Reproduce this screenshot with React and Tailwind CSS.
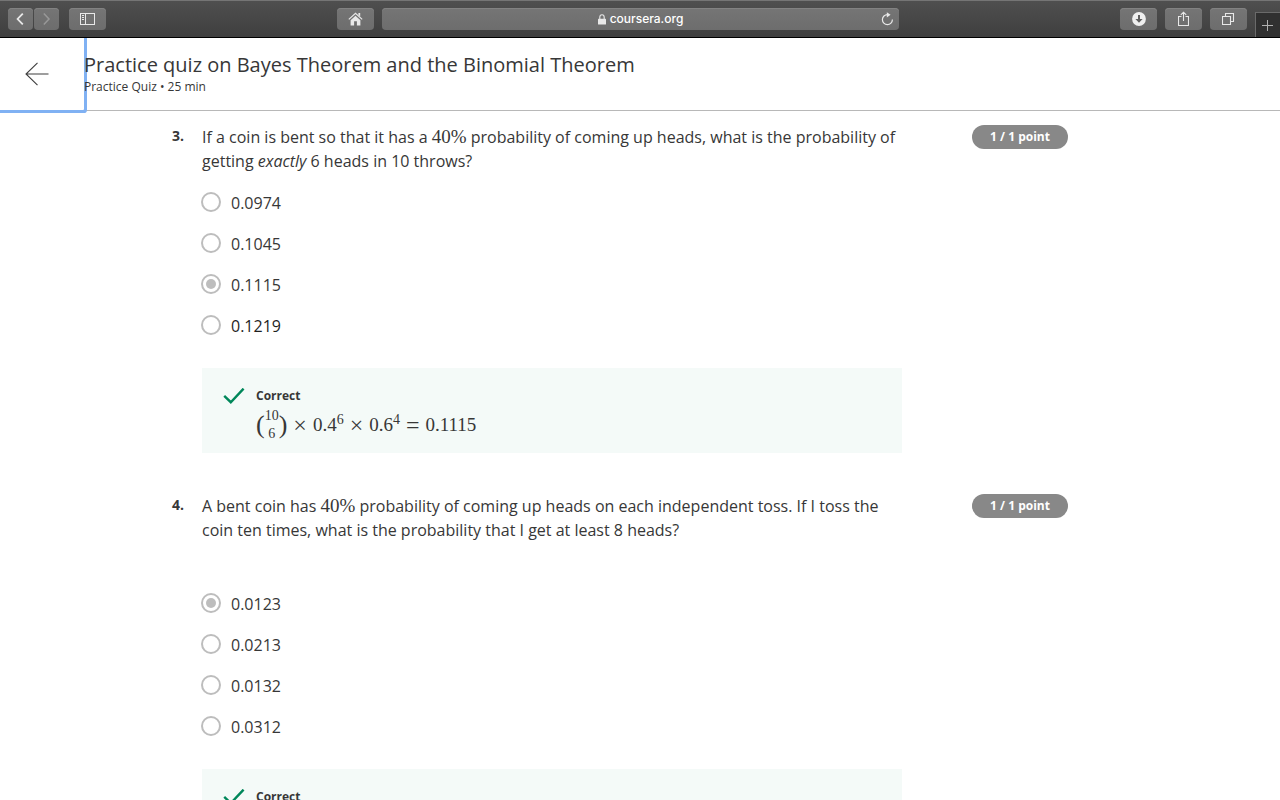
import React from "react";

const toolButton =
  "flex h-[22px] items-center justify-center rounded-[4px] bg-linear-to-b from-[#757575] to-[#6d6d6d] text-[#e8e8e8] shadow-[inset_0_1px_0_#828282]";

function Toolbar() {
  return (
    <nav
      aria-label="Browser"
      className="relative z-10 grid h-[38px] shrink-0 grid-cols-[337fr_562fr_381fr] border-t border-b border-t-[#757575] border-b-black bg-linear-to-b from-[#4f4f4f] to-[#3f3f3f]"
    >
      <div className="flex items-center pl-2">
        <button aria-label="Back" className={`${toolButton} w-[25px]`}>
          <svg width="9" height="12" viewBox="0 0 9 12" fill="none" stroke="currentColor" strokeWidth="1.8">
            <path d="M6.8.6 1.6 6l5.2 5.4" />
          </svg>
        </button>
        <button aria-label="Forward" className={`${toolButton} ml-px w-[25px]`}>
          <svg width="9" height="12" viewBox="0 0 9 12" fill="none" stroke="#989898" strokeWidth="1.5">
            <path d="M1.8.6 7 6l-5.2 5.4" />
          </svg>
        </button>
        <button aria-label="Sidebar" className={`${toolButton} ml-[10px] w-[37px]`}>
          <svg width="15" height="12" viewBox="0 0 15 12" fill="none" stroke="currentColor">
            <rect x=".5" y=".5" width="14" height="11" />
            <path d="M5.5.5v11M2 2.5h2M2 4.5h2M2 6.5h2" />
          </svg>
        </button>
      </div>
      <div className="flex items-center gap-2">
        <button aria-label="Home" className={`${toolButton} w-[37px] shrink-0`}>
          <svg width="15" height="14" viewBox="0 0 15 14" fill="none" stroke="currentColor">
            <path d="M.8 7.4 7.5 1.2l6.7 6.2" strokeWidth="1.2" />
            <path d="M10.4 1h1.8v3.6l-1.8-1.7zM2.6 8.2l4.9-4.5 4.9 4.5V13.5H8.9V9.3H6.1v4.2H2.6z" fill="currentColor" stroke="none" />
          </svg>
        </button>
        <div className={`${toolButton} min-w-0 flex-1 px-[5px]`}>
          <span className="w-[14px]" />
          <a
            href="#address"
            className="flex flex-1 items-center justify-center gap-1 font-[Inter,sans-serif] text-[12px] leading-4 font-medium text-white"
          >
            <svg width="8" height="11" viewBox="0 0 8 11" fill="none">
              <path d="M1.8 5V3.2a2.2 2.4 0 0 1 4.4 0V5" stroke="#e8e8e8" strokeWidth="1.1" />
              <rect y="4.7" width="8" height="5.8" rx=".6" fill="#e8e8e8" />
            </svg>
            coursera.org
          </a>
          <button aria-label="Reload">
            <svg width="14" height="14" viewBox="0 0 14 14" fill="none" stroke="currentColor" strokeWidth="1.2">
              <path d="M7.6 2.7A5 5 0 1 0 12.4 7.6" />
              <path d="M6.8.3 10.6 2.8 6.8 5.4z" fill="currentColor" stroke="none" />
            </svg>
          </button>
        </div>
      </div>
      <div className="flex items-center justify-end gap-2">
        <button aria-label="Downloads" className={`${toolButton} w-[37px]`}>
          <svg width="14" height="14" viewBox="0 0 14 14">
            <circle cx="7" cy="7" r="6.9" fill="#efefef" />
            <path d="M6 3h2v4h2.6L7 10.8 3.4 7H6z" fill="#606060" />
          </svg>
        </button>
        <button aria-label="Share" className={`${toolButton} w-[37px]`}>
          <svg width="11" height="16" viewBox="0 0 11 16" fill="none" stroke="currentColor" strokeWidth="1.1">
            <path d="M3.5 5.5h-3v9h10v-9h-3M5.5 10V1.2M2.8 3.9l2.7-2.7 2.7 2.7" />
          </svg>
        </button>
        <button aria-label="Tabs" className={`${toolButton} w-[37px]`}>
          <svg width="13" height="12" viewBox="0 0 13 12" fill="none" stroke="currentColor" strokeWidth="1.1">
            <path d="M.5 3.5h8v8h-8zM3.5 3.2V.5h8v8H8.8" />
          </svg>
        </button>
        <button
          aria-label="New tab"
          className="flex h-[25px] w-[25px] items-center justify-center self-end border-t border-l border-[#6a6a6a] bg-[#303030]"
        >
          <svg width="12" height="12" viewBox="0 0 12 12" stroke="#b0b0b0" strokeWidth="1">
            <path d="M0 6.5h11M5.5 1v11" />
          </svg>
        </button>
      </div>
    </nav>
  );
}

function Header() {
  return (
    <header className="flex h-[73px] shrink-0 border-b border-[#b8b8b8]">
      <a
        href="#back"
        aria-label="Back to course"
        className="flex w-[84px] items-center rounded-br-[1px] pl-[25px] shadow-[0_0_0_3px_#80b1f3]"
      >
        <svg width="24" height="24" viewBox="0 0 24 24" fill="none" stroke="#3f3f3f" strokeWidth="1.1">
          <path d="M23.5 12H1M12.5.8 1 12l11.5 11.2" />
        </svg>
      </a>
      <div className="relative flex flex-col justify-center gap-px">
        <h1 className="text-[20px] leading-6">Practice quiz on Bayes Theorem and the Binomial Theorem</h1>
        <p className="text-[12px] leading-[18px]">Practice Quiz • 25 min</p>
      </div>
    </header>
  );
}

function MathText({ children }) {
  return <span className="font-['Liberation_Serif',serif] text-[19px] leading-none">{children}</span>;
}

function Formula() {
  return (
    <div className="flex h-10 items-center gap-[6px] font-['Liberation_Serif',serif] text-[19px] leading-6">
      <span className="flex items-center">
        <span className="text-[26px]">(</span>
        <span className="flex flex-col items-center text-[14px] leading-[18px]">
          <span>10</span>
          <span>6</span>
        </span>
        <span className="text-[26px]">)</span>
      </span>
      <span className="text-[24px]">×</span>
      <span>
        0.4<sup className="text-[14px]">6</sup>
      </span>
      <span className="text-[24px]">×</span>
      <span>
        0.6<sup className="text-[14px]">4</sup>
      </span>
      <span className="text-[24px]">=</span>
      <span>0.1115</span>
    </div>
  );
}

function Feedback({ children }) {
  return (
    <div className="mt-[22px] flex min-h-[85px] bg-[#f4faf8] pt-[19px] pl-[21px]">
      <svg className="mt-px mr-[11px] shrink-0" width="22" height="18" viewBox="0 0 22 18" fill="none" stroke="#00875a" strokeWidth="2.4">
        <path d="M1.2 7.8 7.8 14.2 20.6.6" />
      </svg>
      <div>
        <p className="text-[12px] leading-[18px] font-bold">Correct</p>
        {children}
      </div>
    </div>
  );
}

function Question({ number, text, options, picked, active, gap, children }) {
  return (
    <section className="flex items-start">
      <span className="w-[30px] shrink-0 text-[14px] leading-[22px] font-bold">{number}.</span>
      <div className="w-[700px] min-w-0">
        <fieldset>
          <legend className="text-[16px] leading-6">{text}</legend>
          <div className={gap}>
            {options.map((option) => (
              <label key={option} className="-ml-px flex h-[41px] w-fit items-start gap-[10px] pt-[9px]">
                <input
                  type="radio"
                  name={`question-${number}`}
                  defaultChecked={option === picked}
                  className="mt-px size-5 appearance-none rounded-full border-2 border-[#bdbdbd] bg-clip-content p-[3px] checked:bg-[#bdbdbd]"
                />
                <span className={`text-[16px] leading-6 ${option === active ? "text-[#1f1f1f]" : ""}`}>{option}</span>
              </label>
            ))}
          </div>
        </fieldset>
        <Feedback>{children}</Feedback>
      </div>
      <span className="ml-auto w-24 shrink-0 rounded-full bg-[#888888] text-center text-[12px] leading-6 font-bold text-white">
        1 / 1 point
      </span>
    </section>
  );
}

export default function App() {
  return (
    <div className="flex h-screen flex-col overflow-hidden bg-white font-['Open_Sans',sans-serif] text-[#373737]">
      <Toolbar />
      <Header />
      <main className="min-h-0 flex-1 overflow-hidden">
        <div className="mx-auto flex max-w-[936px] flex-col gap-[41px] pt-[14px] pr-10">
          <Question
            number={3}
            text={
              <>
                If a coin is bent so that it has a <MathText>40%</MathText> probability of coming up heads, what is the
                probability of getting <em>exactly</em> 6 heads in 10 throws?
              </>
            }
            options={["0.0974", "0.1045", "0.1115", "0.1219"]}
            picked="0.1115"
            active="0.1219"
            gap="pt-[9px]"
          >
            <Formula />
          </Question>
          <Question
            number={4}
            text={
              <>
                A bent coin has <MathText>40%</MathText> probability of coming up heads on each independent toss. If I
                toss the coin ten times, what is the probability that I get at least 8 heads?
              </>
            }
            options={["0.0123", "0.0213", "0.0132", "0.0312"]}
            picked="0.0123"
            gap="pt-[41px]"
          />
        </div>
      </main>
    </div>
  );
}
